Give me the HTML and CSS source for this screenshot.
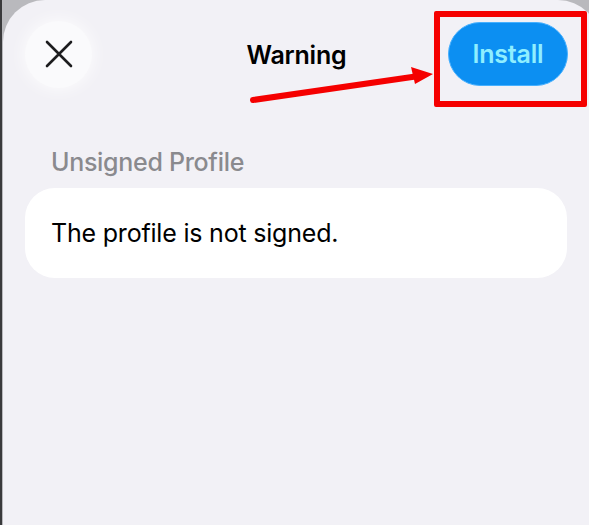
FILE: index.html
```html
<!DOCTYPE html>
<html lang="en">
<head>
  <meta charset="UTF-8">
  <meta name="viewport" content="width=device-width, initial-scale=1.0">
  <title>Warning</title>
  <link rel="stylesheet" href="styles.css">
</head>
<body>
  <div class="screen">
    <div class="sheet">
      <div class="nav-bar">
        <button class="close-button" aria-label="Close">
          <svg width="28" height="28" viewBox="0 0 28 28">
            <path d="M2 2 L26 26 M26 2 L2 26" stroke="#1c1c1e" stroke-width="2.6" stroke-linecap="round"/>
          </svg>
        </button>
        <div class="nav-title">Warning</div>
        <button class="install-button">Install</button>

        <!-- red callout over the Install button -->
        <div class="callout-box"></div>
        <svg class="callout-arrow" width="200" height="40" viewBox="0 0 200 40">
          <path d="M4 33 L170 9" stroke="#f50000" stroke-width="6" stroke-linecap="round"/>
          <polygon points="184,7 162,0 166,17" fill="#f50000"/>
        </svg>
      </div>

      <div class="section">
        <div class="section-title">Unsigned Profile</div>
        <div class="card">The profile is not signed.</div>
      </div>
    </div>
  </div>
</body>
</html>
```

FILE: styles.css
```css
:root {
  --bg-behind: #b9b9bd;
  --bg-sheet: #f2f1f6;
  --text-primary: #000000;
  --text-secondary: #8a8a8e;
  --accent: #0c8ff2;
  --callout: #f50000;
}

html, body {
  margin: 0;
  height: 100%;
  overflow: hidden;
}

body {
  font-family: Inter, "Noto Sans", "Liberation Sans", sans-serif;
  background-color: var(--bg-behind);
}

.screen {
  height: 100%;
  border-left: 2px solid #3a3a3c;
  background-color: var(--bg-behind);
  box-sizing: border-box;
}

.sheet {
  margin-left: 1px;
  width: calc(100% + 10px);
  height: 100%;
  background-color: var(--bg-sheet);
  border-radius: 42px 42px 0 0;
}

.nav-bar {
  position: relative;
  display: flex;
  align-items: center;
  justify-content: space-between;
  padding: 21px 32px 0 22px;
  height: 66px;
}

.close-button {
  width: 67px;
  height: 67px;
  border-radius: 50%;
  border: none;
  background-color: #fafafc;
  box-shadow: 0 0 18px rgba(255, 255, 255, 0.9);
  display: flex;
  align-items: center;
  justify-content: center;
  padding: 0;
}

.nav-title {
  position: absolute;
  left: 0;
  right: 10px;
  top: 40px;
  text-align: center;
  font-size: 25px;
  font-weight: 600;
  color: var(--text-primary);
  letter-spacing: -0.2px;
  pointer-events: none;
}

.install-button {
  width: 120px;
  height: 64px;
  border-radius: 32px;
  border: 1.5px solid #46b0ff;
  background-color: var(--accent);
  color: #8feeff;
  font-family: inherit;
  font-size: 25px;
  font-weight: 600;
  letter-spacing: -0.2px;
  padding: 0;
}

.callout-box {
  position: absolute;
  left: 431px;
  top: 11px;
  width: 141px;
  height: 84px;
  border: 6px solid var(--callout);
  border-radius: 2px;
}

.callout-arrow {
  position: absolute;
  left: 246px;
  top: 67px;
}

.section {
  padding: 60px 22px 0 22px;
}

.section-title {
  font-size: 25px;
  font-weight: 500;
  color: var(--text-secondary);
  padding-left: 26px;
  margin-bottom: 11px;
  letter-spacing: -0.3px;
}

.card {
  width: 542px;
  height: 90px;
  box-sizing: border-box;
  background-color: #ffffff;
  border-radius: 30px;
  display: flex;
  align-items: center;
  padding-left: 26px;
  font-size: 25px;
  color: var(--text-primary);
  letter-spacing: -0.2px;
}
```
